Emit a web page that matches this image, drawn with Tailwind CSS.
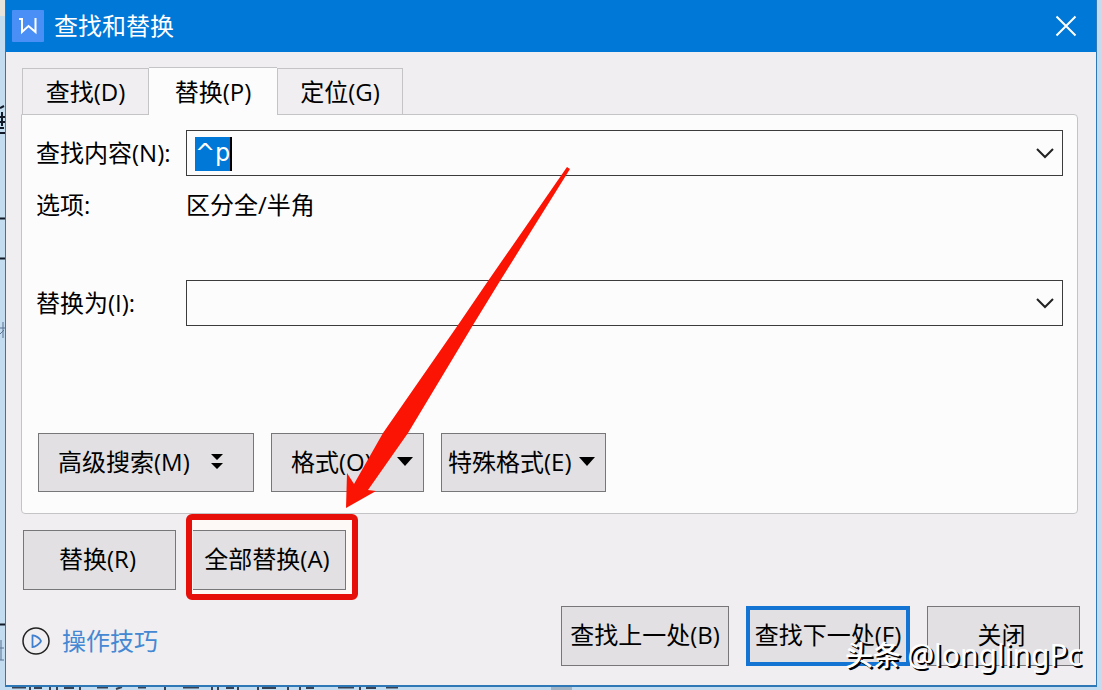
<!doctype html>
<html lang="zh-CN">
<head>
    <meta charset="utf-8">
    <meta name="viewport" content="width=device-width, initial-scale=1">
    <title>查找和替换</title>
    <script src="https://cdn.jsdelivr.net/npm/@tailwindcss/browser@4"></script>
</head>
<body class="relative h-screen overflow-hidden bg-[#c3dcf0] font-['Open_Sans','Noto_Sans_CJK_SC',sans-serif] text-2xl text-black">
    <!-- Documento detrás del cuadro -->
    <svg class="absolute left-0 top-0" width="6" height="690" viewBox="0 0 6 690" fill="none" stroke="#111827" aria-hidden="true">
        <path d="M0 0H6V16H0z" fill="#e8e4dc" stroke="none"/>
        <path d="M0 108l4-2M0 117h5M2 112v14M0 122h5M0 128h4M0 133h5" stroke-width="2"/>
        <path d="M0 218.500h5M0 258.500h5M0 624.500h5" stroke-width="2"/>
        <path d="M3 322v16M0 328h5M0 334l4-4M0 648h4M1 640v20M0 660h4" stroke="#5b7391"/>
    </svg>
    <svg class="absolute bottom-0 left-0" width="600" height="4" viewBox="0 0 600 4" fill="none" stroke="#374151" aria-hidden="true">
        <path d="M12 1.500h14M30 0v4M34 2h8M50 0v4M57 0v4M64 2h10M80 0v4M97 1.500h11M116 3l6-2M138 1.500h8M165 0v4M183 1.500h16M212 0v4M218 0v4M226 2h8M238 0v4M258 0v4M262 2h14M288 0v4M300 0v4M306 2h8M338 1.500h16M360 0v4M366 2h10M386 1.500h12" stroke-width="2"/>
        <path d="M551 0h21v4h-21z" fill="#9fb3c4" stroke="none"/>
    </svg>

    <!-- Cuadro de diálogo -->
    <div class="relative mx-[5px] border-x border-b-2 border-[#2f78b8] bg-[#f0eef0]">
        <header class="flex h-[52px] items-center bg-[#0078d7] pl-[6px] pr-[17px] text-white">
            <svg width="32" height="32" viewBox="0 0 32 32" fill="none" aria-hidden="true">
                <rect width="32" height="32" rx="1" fill="#4a8ff5"/>
                <path d="M7 9h3v13l6.500-6 7 6V8" stroke="#fff" stroke-width="2"/>
            </svg>
            <h1 class="ml-[10px] flex-1 leading-8">查找和替换</h1>
            <button type="button" aria-label="关闭窗口" class="p-[2px]">
                <svg width="22" height="22" viewBox="0 0 22 22" fill="none" stroke="#fff" stroke-width="2">
                    <path d="M1.500 1.500l19 19M20.500 1.500l-19 19"/>
                </svg>
            </button>
        </header>

        <main class="pb-[19px] pl-[15px] pr-[18px] pt-[15px]">
            <!-- Pestañas -->
            <div class="flex items-end" role="tablist">
                <button type="button" role="tab" class="ml-[1px] h-[46px] w-[127px] border border-b-0 border-[#c4c4c6] leading-8">查找(D)</button>
                <button type="button" role="tab" aria-selected="true" class="relative z-10 -mb-[1px] h-12 w-[128px] border-t border-[#c4c4c6] bg-[#fdfcfd] leading-8">替换(P)</button>
                <button type="button" role="tab" class="h-[46px] w-[126px] border border-b-0 border-[#c4c4c6] leading-8">定位(G)</button>
            </div>

            <section class="rounded-b-sm rounded-tr-sm border border-[#c4c4c6] bg-[#fdfcfd] px-[14px] pb-[21px] pt-[15px]">
                <div class="flex items-center">
                    <label for="findText" class="w-[150px] leading-8">查找内容(N):</label>
                    <div class="relative flex h-[46px] flex-1 items-center border border-[#3c3c3c]">
                        <span class="absolute left-2 top-[6px] h-[34px] w-[37px] border-r-2 border-black bg-[#0078d7]"></span>
                        <input id="findText" type="text" value="^p" autofocus class="relative h-full min-w-0 flex-1 bg-transparent px-2 font-['DejaVu_Sans',sans-serif] text-white outline-none selection:bg-[#0078d7] selection:text-white">
                        <button type="button" aria-label="展开查找内容" class="px-2">
                            <svg width="18" height="12" viewBox="0 0 18 12" fill="none" stroke="#222" stroke-width="2">
                                <path d="M1 2l8 8 8-8"/>
                            </svg>
                        </button>
                    </div>
                </div>
                <div class="mt-[13px] flex leading-8">
                    <span class="w-[150px]">选项:</span>
                    <span>区分全/半角</span>
                </div>
                <div class="mt-[59px] flex items-center">
                    <label for="replaceText" class="w-[150px] leading-8">替换为(I):</label>
                    <div class="flex h-[46px] flex-1 items-center border border-[#3c3c3c]">
                        <input id="replaceText" type="text" class="h-full min-w-0 flex-1 bg-transparent px-2 outline-none">
                        <button type="button" aria-label="展开替换为" class="px-2">
                            <svg width="18" height="12" viewBox="0 0 18 12" fill="none" stroke="#222" stroke-width="2">
                                <path d="M1 2l8 8 8-8"/>
                            </svg>
                        </button>
                    </div>
                </div>
                <div class="mt-[107px] flex gap-[17px] pl-[2px]">
                    <button type="button" class="flex h-[59px] w-[216px] items-center justify-between border border-[#77777a] bg-[#e2e0e2] pb-[2px] pl-[19px] pr-[30px]">
                        高级搜索(M)
                        <svg width="12" height="16" viewBox="0 0 12 16"><path d="M0 0h12L6 6zM0 9h12L6 15z"/></svg>
                    </button>
                    <button type="button" class="flex h-[59px] w-[153px] items-center justify-between border border-[#77777a] bg-[#e2e0e2] pb-[2px] pl-[19px] pr-[10px]">
                        格式(O)
                        <svg width="16" height="9" viewBox="0 0 16 9"><path d="M0 0h16L8 9z"/></svg>
                    </button>
                    <button type="button" class="flex h-[59px] w-[165px] items-center justify-between border border-[#77777a] bg-[#e2e0e2] pb-[2px] pl-[6px] pr-[10px]">
                        特殊格式(E)
                        <svg width="16" height="9" viewBox="0 0 16 9"><path d="M0 0h16L8 9z"/></svg>
                    </button>
                </div>
            </section>

            <!-- Botones de reemplazo -->
            <div class="mt-4 flex gap-[17px] pl-[2px]">
                <button type="button" class="h-[60px] w-[153px] border border-[#77777a] bg-[#e2e0e2] pb-[2px] pr-1">替换(R)</button>
                <div class="relative">
                    <div class="absolute -bottom-[10px] -left-[7px] -right-[12px] -top-4 rounded-md border-6 border-[#e60f0a] bg-[#fdf9f7]"></div>
                    <button type="button" class="relative h-[60px] w-[153px] border border-l-0 border-[#77777a] bg-[#e2e0e2] pb-[2px] pr-1">全部替换(A)</button>
                </div>
            </div>

            <div class="-mr-[2px] mt-4 flex items-center gap-[17px] pl-[1px]">
                <a href="#" class="mr-auto flex items-center gap-3 pt-[10px] leading-8 text-[#4488d4]">
                    <svg width="28" height="28" viewBox="0 0 28 28" fill="none" aria-hidden="true">
                        <circle cx="14" cy="14" r="13" stroke="#222" stroke-width="1.500"/>
                        <path d="M10.500 8.500v11.500c2.500 0 8-3.500 8.500-6-.5-2.500-6-6-8.500-5.500z" stroke="#3f7fd0" stroke-width="1.800"/>
                    </svg>
                    操作技巧
                </a>
                <button type="button" class="h-[60px] w-[168px] border border-[#77777a] bg-[#e2e0e2] pb-[2px]">查找上一处(B)</button>
                <button type="button" class="h-[60px] w-[164px] whitespace-nowrap border-4 border-[#1474d4] bg-[#e2e0e2] pb-[2px]">查找下一处(F)</button>
                <button type="button" class="h-[60px] w-[153px] border border-[#77777a] bg-[#e2e0e2] pb-[2px] pr-1">关闭</button>
            </div>
        </main>

        <!-- Flecha de la anotación -->
        <svg class="pointer-events-none absolute left-[339px] top-[166px]" width="228" height="344" viewBox="0 0 228 344" aria-hidden="true">
            <path d="M222 1L225 3L155 115L128 159L63 267L23 324L31 325L1 342L2 307L9 318L38 267L113 159L143 115Z" fill="#fb1404"/>
        </svg>

        <!-- Marca de agua -->
        <p class="pointer-events-none absolute bottom-[10px] right-[14px] flex items-baseline gap-[6px] font-['Noto_Sans','Noto_Sans_CJK_SC',sans-serif] text-white text-shadow-[2px_2px_0_#000]">
            <span class="text-[28px] font-medium leading-10">头条</span>
            <span class="text-3xl leading-10">@longlingPc</span>
        </p>
    </div>

    <script>
        // Seleccionar el texto buscado al abrir
        const findText = document.getElementById('findText');
        findText.focus();
        findText.select();
    </script>
</body>
</html>
